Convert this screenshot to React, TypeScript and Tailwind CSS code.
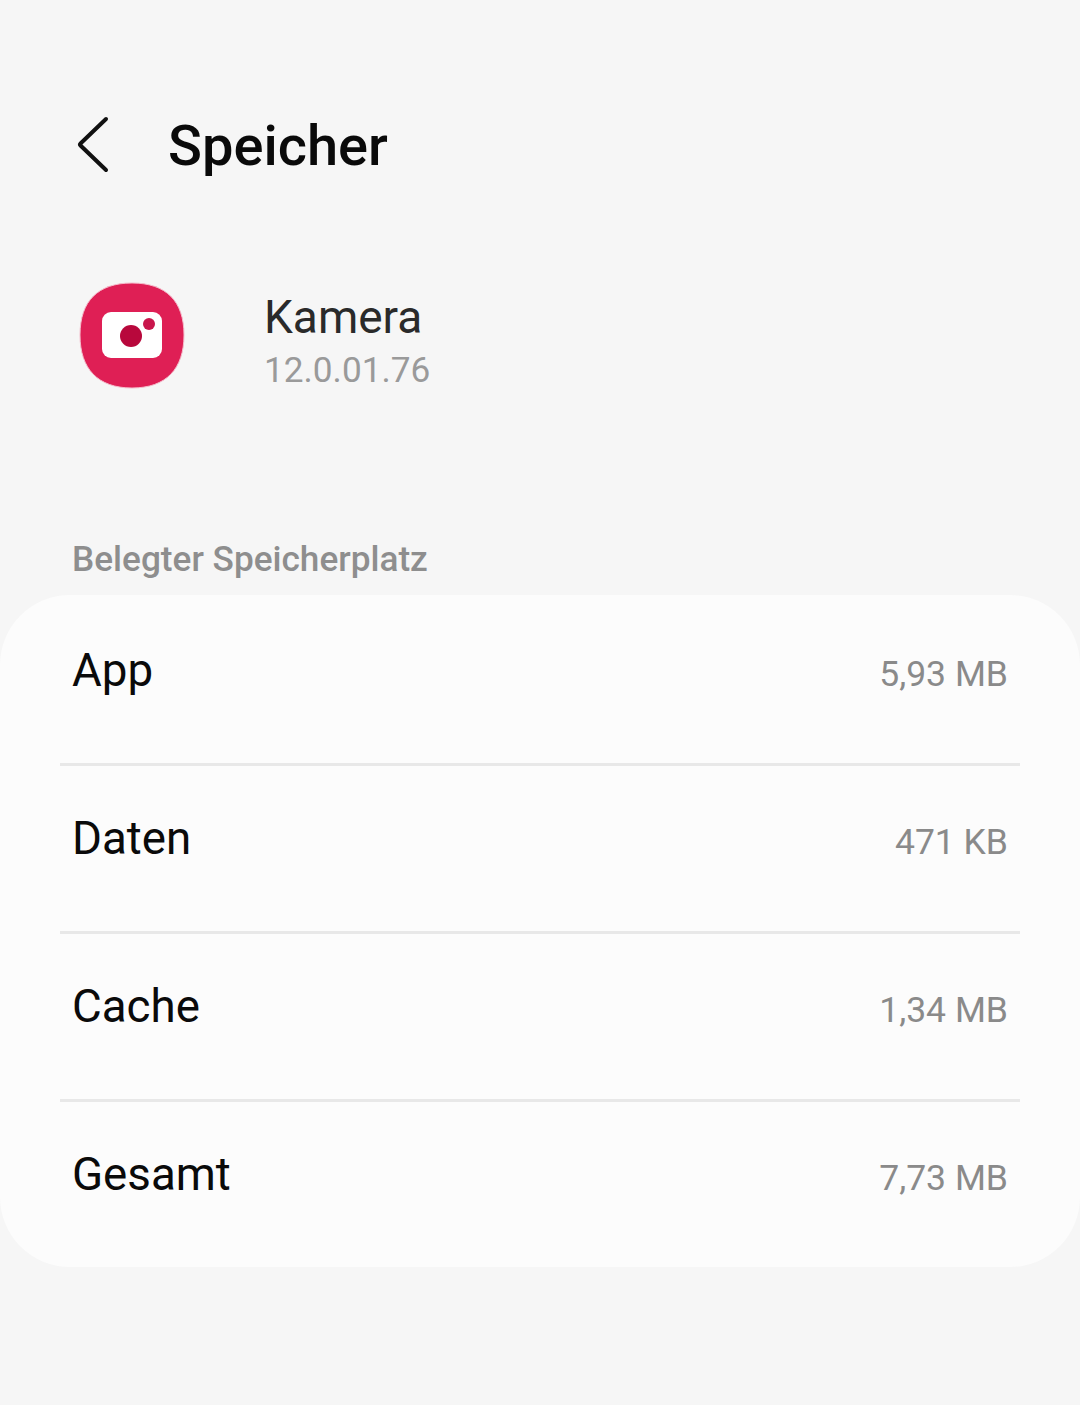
const rows = [
    { label: 'App', size: '5,93 MB' },
    { label: 'Daten', size: '471 KB' },
    { label: 'Cache', size: '1,34 MB' },
    { label: 'Gesamt', size: '7,73 MB' },
];

const CameraIcon = () => (
    <svg className="shrink-0" width="108" height="108" viewBox="0 0 108 108">
        <path d="M54 2 C88 2 106 20 106 54 C106 88 88 107 54 107 C20 107 2 88 2 54 C2 20 20 2 54 2 Z" fill="#df1f55" stroke="#f5bccb" strokeWidth="1" />
        <rect x="24" y="31" width="60" height="46" rx="9" fill="#ffffff" />
        <circle cx="53" cy="55" r="11" fill="#b8083c" />
        <circle cx="71" cy="43" r="6" fill="#c9164c" />
    </svg>
);

export default function App() {
    return (
        <div className="w-[1080px] h-[1405px] bg-[#f6f6f6] overflow-hidden font-['Roboto',sans-serif]">
            <div className="flex items-center h-[100px] mt-[95px]">
                <svg className="ml-[76px] shrink-0" width="34" height="60" viewBox="0 0 34 60" fill="none">
                    <path d="M30 4 L4.5 28.5 Q3.5 29.5 4.5 30.5 L30 55" stroke="#111111" strokeWidth="4" strokeLinecap="round" strokeLinejoin="round" />
                </svg>
                <div className="ml-[58px] mt-[2px] text-[56px] leading-none font-medium text-[#0a0a0a]">Speicher</div>
            </div>

            <div className="flex items-start mt-[86px] ml-[78px]">
                <CameraIcon />
                <div className="ml-[78px] mt-[9px]">
                    <div className="text-[46px] leading-[54px] text-[#2a2a2a]">Kamera</div>
                    <div className="text-[35.2px] leading-[53px] text-[#9a9a9a]">12.0.01.76</div>
                </div>
            </div>

            <div className="mt-[140px] ml-[72px] text-[35.2px] leading-[44px] font-medium text-[#8e8e8e]">Belegter Speicherplatz</div>

            <div className="mt-[14px] h-[672px] rounded-[70px] bg-[#fcfcfc] px-[60px]">
                {rows.map((row, i) => (
                    <div key={row.label} className={`h-[168px] flex items-start justify-between px-[13px] border-t-[3px] ${i > 0 ? 'border-[#e8e8e8]' : 'border-transparent'}`}>
                        <div className="mt-[45px] -ml-px text-[45.7px] leading-[56px] text-[#0a0a0a]">{row.label}</div>
                        <div className="mt-[56px] -mr-px text-[35.5px] leading-[40px] text-[#8a8a8a]">{row.size}</div>
                    </div>
                ))}
            </div>
        </div>
    );
}
